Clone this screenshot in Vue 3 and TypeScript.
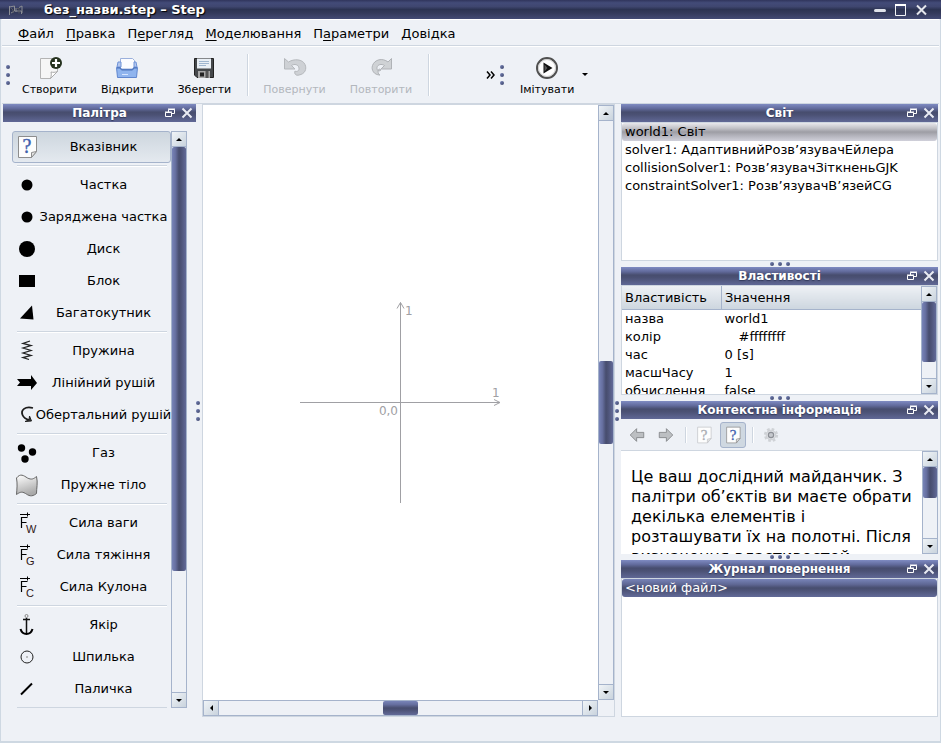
<script setup lang="ts">
import { ref } from 'vue'

interface MenuEntry { before: string; key: string; after: string }
interface ToolAction { label: string; icon: string; disabled?: boolean }
interface PaletteItem { label: string; icon: string }
interface ScrollRange { before: number; size: number; after: number }

const menus: MenuEntry[] = [
  { before: '', key: 'Ф', after: 'айл' },
  { before: '', key: 'П', after: 'равка' },
  { before: 'П', key: 'е', after: 'регляд' },
  { before: '', key: 'М', after: 'оделювання' },
  { before: 'П', key: 'а', after: 'раметри' },
  { before: '', key: 'Д', after: 'овідка' },
]

const fileActions: ToolAction[] = [
  { label: 'Створити', icon: 'new' },
  { label: 'Відкрити', icon: 'open' },
  { label: 'Зберегти', icon: 'save' },
]
const historyActions: ToolAction[] = [
  { label: 'Повернути', icon: 'undo', disabled: true },
  { label: 'Повторити', icon: 'redo', disabled: true },
]

const paletteGroups: PaletteItem[][] = [
  [{ label: 'Вказівник', icon: 'help' }],
  [
    { label: 'Частка', icon: 'particle' },
    { label: 'Заряджена частка', icon: 'particle' },
    { label: 'Диск', icon: 'disk' },
    { label: 'Блок', icon: 'box' },
    { label: 'Багатокутник', icon: 'polygon' },
  ],
  [
    { label: 'Пружина', icon: 'spring' },
    { label: 'Лінійний рушій', icon: 'motor' },
    { label: 'Обертальний рушій', icon: 'circmotor' },
  ],
  [
    { label: 'Газ', icon: 'gas' },
    { label: 'Пружне тіло', icon: 'softbody' },
  ],
  [
    { label: 'Сила ваги', icon: 'forceW' },
    { label: 'Сила тяжіння', icon: 'forceG' },
    { label: 'Сила Кулона', icon: 'forceC' },
  ],
  [
    { label: 'Якір', icon: 'anchor' },
    { label: 'Шпилька', icon: 'pin' },
    { label: 'Паличка', icon: 'stick' },
  ],
]
const activeTool = ref('Вказівник')

const worldItems = [
  'world1: Світ',
  'solver1: АдаптивнийРозв’язувачЕйлера',
  'collisionSolver1: Розв’язувачЗіткненьGJK',
  'constraintSolver1: Розв’язувачВ’язейCG',
]
const selectedWorldItem = ref(0)

const properties = [
  { name: 'назва', value: 'world1' },
  { name: 'колір', value: '#ffffffff', swatch: true },
  { name: 'час', value: '0 [s]' },
  { name: 'масшЧасу', value: '1' },
  { name: 'обчислення', value: 'false' },
]

const scroll: Record<string, ScrollRange> = {
  palette: { before: 0, size: 424, after: 121 },
  sceneY: { before: 240, size: 83, after: 240 },
  sceneX: { before: 164, size: 35, after: 164 },
  props: { before: 0, size: 60, after: 16 },
  info: { before: 0, size: 31, after: 40 },
}

const force = (s: string) =>
  `<path d="M5 3.500h10M12.500 1.500v4" fill="none" stroke="#000"/><path d="M6.500 17V6.500h6M6.500 11.500h5" fill="none" stroke="#000" stroke-width="1.200"/><text x="11" y="22" font-family="Liberation Sans" font-size="11" fill="#301818">${s}</text>`

const page = (ink: string, edge: string) =>
  `<path d="M3.500 1.500h18v15l-5 6h-13z" fill="#fdfdfd" stroke="${edge}"/><path d="M21.500 16.500l-5 6v-5z" fill="#e4e4e4" stroke="${edge}"/><text x="12" y="18" text-anchor="middle" font-family="Liberation Serif" font-size="20" fill="${ink}" stroke="${ink}" stroke-width=".4">?</text>`

const icons: Record<string, string> = {
  new: '<path d="M2.500 2.500h17v13l-7 7h-10z" fill="#f6f6f6" stroke="#b4b4b4"/><path d="M19.500 15.500l-7 7c1-3 1-5 .5-6.500 2 .5 4 .5 6.500-.5z" fill="#fff" stroke="#aaa"/><circle cx="18" cy="7" r="6" fill="#26331f"/><path d="M18 3v8M14 7h8" stroke="#fff" stroke-width="2.200"/>',
  open: '<path d="M5.500 13v-10.500h12l2 2v8.500z" fill="#fbfcff" stroke="#9bb0dc"/><path d="M3 6h3v5H2zM19 6h2l1 5h-3z" fill="#b5c8ee" stroke="#6f93d8"/><path d="M1.500 11.500h4l1 2h11l1-2h4l-1 10h-19z" fill="#8fb4ee" stroke="#5f86cf"/><path d="M2 12h3l1.500 2h11l1.500-2h3" fill="none" stroke="#4d72b8"/><path d="M7 18.500h6" stroke="#d7e5ff"/>',
  save: '<path d="M2.500 2.500h19v19H5l-2.500-2.500z" fill="#45484b" stroke="#222"/><path d="M5 2.500h14v10H5z" fill="#e9eff5"/><path d="M7 5.500h10M7 7.500h10M7 9.500h7" stroke="#9fb6cf"/><path d="M6 15h12v7H6z" fill="#a8a8a8"/><path d="M8 16.500h4v4H8z" fill="#222"/><path d="M15 15v7" stroke="#555" stroke-width="3"/>',
  undo: '<path d="M1.500 2.500v10.500h10.500l-3.500-3.500c3-2 7-1 7.500 2.500s-3 4-4 3c-1 3 1 5 4 4 6-1 8-6 6-10.500-2.500-5.500-11-6-16.500-2.500z" fill="#ced1d5" stroke="#b5b8bc"/>',
  redo: '<path d="M22.500 2.500v10.500H12l3.500-3.500c-3-2-7-1-7.500 2-.5 3.500 3 4 4 2.500-1-1.500-3-1-3 1 0 3 1 3.500 2 4-6 0-9-5-7.500-9.500 2-6 10-8 15.500-3.500z" fill="#cfd2d5" stroke="#b0b3b7"/>',
  play: '<circle cx="12" cy="12" r="10" fill="#fff" stroke="#505050" stroke-width="2"/><circle cx="12" cy="12" r="8.500" fill="none" stroke="#ccc"/><path d="M8.500 6.500v11l9-5.500z" fill="#111"/><path d="M9.500 8.500v7l3-3.500z" fill="#555"/>',
  help: page('#3f5fae', '#8d8d8d'),
  helpOff: page('#a9acb2', '#c4c6c9'),
  particle: '<circle cx="12" cy="12" r="5.500"/>',
  disk: '<circle cx="12" cy="12" r="8"/>',
  box: '<path d="M4 6h16v12H4z"/>',
  polygon: '<path d="M5 17.500L17 4.500l1.500 14z"/>',
  spring: '<path d="M15 2l-7 2.500 8 2-8 2.500 8 2.500-8 2.500 8 2.500-8 2 6 2" fill="none" stroke="#222" stroke-width="1.300"/>',
  motor: '<path d="M2 8h14V4l6 8-6 7v-4H2l3-3.500z"/>',
  circmotor: '<path d="M18 5c-8-2-12.500 2-10.500 7 1 2.500 3 4 7 5" fill="none" stroke="#1c1c1c" stroke-width="1.800"/><path d="M14.500 13l2 5-6.500.5 4-1.500z" fill="#333" stroke="#222"/>',
  gas: '<circle cx="6.500" cy="7" r="3.700"/><circle cx="17.500" cy="11" r="3.700"/><circle cx="10" cy="18" r="3.700"/>',
  softbody: '<defs><linearGradient id="soft" x2=".3" y2="1"><stop stop-color="#fff"/><stop offset="1" stop-color="#aaa"/></linearGradient></defs><path d="M1.500 5c4-5 7-2.500 11 0 4 2 6 1 9-1.500 1.500 6 0 12 0 17-5 4-8 2-11 0-4-2.500-6-1-9 1 .5-6 1-11 0-16.500z" fill="url(#soft)" stroke="#666"/>',
  forceW: force('W'),
  forceG: force('G'),
  forceC: force('C'),
  anchor: '<circle cx="11.500" cy="3" r="1.500" fill="none" stroke="#888"/><path d="M11.500 5v16M8 6.500h7" stroke="#111" stroke-width="1.500"/><path d="M5.500 16c1 3.500 4 5 6 5s5-1.500 6-5" fill="none" stroke="#000" stroke-width="2"/>',
  pin: '<circle cx="12" cy="12" r="6" fill="none" stroke="#222"/><circle cx="12" cy="12" r="1" fill="#aaa"/>',
  stick: '<path d="M6 17.500L17 6.500" stroke="#000" stroke-width="2"/>',
  back: '<path d="M3 12l8.500-8.500v5H21v7h-9.500v5z" fill="#bcbfc2" stroke="#77797c"/>',
  forward: '<path d="M21 12l-8.500-8.500v5H3v7h9.500v5z" fill="#bcbfc2" stroke="#77797c"/>',
  gear: '<circle cx="12" cy="12" r="8" fill="none" stroke="#cfd2d6" stroke-width="3" stroke-dasharray="3.500 2.780"/><circle cx="12" cy="12" r="6.500" fill="#dcdee2" stroke="#c4c7cb"/><circle cx="12" cy="12" r="3.500" fill="#c6c9ce" stroke="#8c8f96" stroke-width="1.500"/>',
}
</script>

<template>
  <div class="window">
    <header class="titlebar">
      <svg class="appicon" viewBox="0 0 16 16" aria-hidden="true">
        <path d="M1.500 4v9M1.500 5l5-1v5h7v3M8 6v4M11 5.500l3-1.500v7M3 11l3-1.500" fill="none" stroke="#8b8d94" />
        <path d="M3 6l2 2v3M9 6.500h2v5" fill="none" stroke="#55575f" />
      </svg>
      <h1>без_назви.step – Step</h1>
      <div class="winbuttons">
        <button aria-label="Згорнути"><svg viewBox="0 0 14 14"><path d="M2.500 7.500h9" stroke="#dfe2ea" stroke-width="3" stroke-linecap="round" /></svg></button>
        <button aria-label="Розгорнути"><svg viewBox="0 0 14 14"><path d="M1.500 2.500h10v10h-10z" fill="none" stroke="#f0f2f6" /><path d="M1 2h11" stroke="#fff" stroke-width="2" /></svg></button>
        <button aria-label="Закрити"><svg viewBox="0 0 14 14"><path d="M2 2.500l9 9M11 2.500l-9 9" stroke="#e4e6ec" stroke-width="2" /></svg></button>
      </div>
    </header>

    <nav class="menubar">
      <button v-for="m in menus" :key="m.after">{{ m.before }}<u>{{ m.key }}</u>{{ m.after }}</button>
    </nav>

    <div class="toolbars">
      <div class="toolbar main-tools">
        <span class="dots"><i /><i /><i /></span>
        <div class="group">
          <button v-for="a in fileActions" :key="a.label">
            <svg viewBox="0 0 24 24" v-html="icons[a.icon]" />{{ a.label }}
          </button>
        </div>
        <span class="vsep" />
        <div class="group">
          <button v-for="a in historyActions" :key="a.label" :disabled="a.disabled">
            <svg viewBox="0 0 24 24" v-html="icons[a.icon]" />{{ a.label }}
          </button>
        </div>
        <span class="vsep" />
        <button class="more" aria-label="Більше">
          <svg viewBox="0 0 10 8"><path d="M1 0.500l3 3.500-3 3.500M5 0.500l3 3.500-3 3.500" fill="none" stroke="#000" stroke-width="1.500" /></svg>
        </button>
      </div>
      <div class="toolbar sim-tools">
        <span class="dots"><i /><i /><i /></span>
        <button><svg viewBox="0 0 24 24" v-html="icons.play" />Імітувати</button>
        <button class="drop" aria-label="Варіанти імітації"><svg viewBox="0 0 6 4"><path d="M0 0h6L3 3z" /></svg></button>
      </div>
    </div>

    <main class="workspace">
      <section class="dock">
        <header class="docktitle">
          <h2>Палітра</h2>
          <div class="dockbuttons">
            <button aria-label="Від’єднати"><svg viewBox="0 0 12 12"><path d="M4.500 5V2.500h6v4H8M4 2h7M1.500 5.500h6v4h-6zM1 5h7" fill="none" stroke="#fff" /></svg></button>
            <button aria-label="Закрити"><svg viewBox="0 0 12 12"><path d="M1.500 1.500l9 9M10.500 1.500l-9 9" stroke="#e9ebf3" stroke-width="2" /></svg></button>
          </div>
        </header>
        <div class="palette">
          <div class="palette-list">
            <div v-for="(g, i) in paletteGroups" :key="i" class="palette-group">
              <button
                v-for="p in g"
                :key="p.label"
                :class="{ active: p.label === activeTool }"
                @click="activeTool = p.label"
              >
                <svg viewBox="0 0 24 24" v-html="icons[p.icon]" />
                <span>{{ p.label }}</span>
              </button>
            </div>
          </div>
          <div class="sb vertical">
            <button class="up" aria-label="Вгору" />
            <div class="track">
              <i :style="{ flexGrow: scroll.palette.before }" /><b :style="{ flexGrow: scroll.palette.size }" /><i :style="{ flexGrow: scroll.palette.after }" />
            </div>
            <button class="down" aria-label="Вниз" />
          </div>
        </div>
      </section>

      <div class="splitter column"><span class="dots"><i /><i /><i /></span></div>

      <section class="scene">
        <div class="view">
          <svg class="axes" viewBox="0 0 203 203" role="img" aria-label="Осі координат">
            <path d="M1 101.500h200M101.500 202V1.500M98 7.500l3.500-6 3.500 6M195 98.500l6 3-6 3" fill="none" stroke="#a0a0a4" />
            <text x="106" y="14">1</text>
            <text x="193" y="96">1</text>
            <text x="99" y="114" text-anchor="end">0,0</text>
          </svg>
        </div>
        <div class="sb vertical">
          <button class="up" aria-label="Вгору" />
          <div class="track">
            <i :style="{ flexGrow: scroll.sceneY.before }" /><b :style="{ flexGrow: scroll.sceneY.size }" /><i :style="{ flexGrow: scroll.sceneY.after }" />
          </div>
          <button class="down" aria-label="Вниз" />
        </div>
        <div class="sb horizontal">
          <button class="left" aria-label="Ліворуч" />
          <div class="track">
            <i :style="{ flexGrow: scroll.sceneX.before }" /><b :style="{ flexGrow: scroll.sceneX.size }" /><i :style="{ flexGrow: scroll.sceneX.after }" />
          </div>
          <button class="right" aria-label="Праворуч" />
        </div>
        <div class="corner" />
      </section>

      <div class="splitter column"><span class="dots"><i /><i /><i /></span></div>

      <aside class="side">
        <section class="dock">
          <header class="docktitle">
            <h2>Світ</h2>
            <div class="dockbuttons">
              <button aria-label="Від’єднати"><svg viewBox="0 0 12 12"><path d="M4.500 5V2.500h6v4H8M4 2h7M1.500 5.500h6v4h-6zM1 5h7" fill="none" stroke="#fff" /></svg></button>
              <button aria-label="Закрити"><svg viewBox="0 0 12 12"><path d="M1.500 1.500l9 9M10.500 1.500l-9 9" stroke="#e9ebf3" stroke-width="2" /></svg></button>
            </div>
          </header>
          <ul class="list" role="listbox">
            <li
              v-for="(w, i) in worldItems"
              :key="w"
              role="option"
              :aria-selected="i === selectedWorldItem"
              :class="{ inactive: i === selectedWorldItem }"
              @click="selectedWorldItem = i"
            >{{ w }}</li>
          </ul>
        </section>

        <div class="splitter"><span class="dots"><i /><i /><i /></span></div>

        <section class="dock">
          <header class="docktitle">
            <h2>Властивості</h2>
            <div class="dockbuttons">
              <button aria-label="Від’єднати"><svg viewBox="0 0 12 12"><path d="M4.500 5V2.500h6v4H8M4 2h7M1.500 5.500h6v4h-6zM1 5h7" fill="none" stroke="#fff" /></svg></button>
              <button aria-label="Закрити"><svg viewBox="0 0 12 12"><path d="M1.500 1.500l9 9M10.500 1.500l-9 9" stroke="#e9ebf3" stroke-width="2" /></svg></button>
            </div>
          </header>
          <div class="props">
            <div class="clip">
              <table>
                <thead><tr><th>Властивість</th><th>Значення</th></tr></thead>
                <tbody>
                  <tr v-for="p in properties" :key="p.name">
                    <td>{{ p.name }}</td>
                    <td :class="{ swatch: p.swatch }">{{ p.value }}</td>
                  </tr>
                </tbody>
              </table>
            </div>
            <div class="sb vertical">
              <button class="up" aria-label="Вгору" />
              <div class="track">
                <i :style="{ flexGrow: scroll.props.before }" /><b :style="{ flexGrow: scroll.props.size }" /><i :style="{ flexGrow: scroll.props.after }" />
              </div>
              <button class="down" aria-label="Вниз" />
            </div>
          </div>
        </section>

        <div class="splitter"><span class="dots"><i /><i /><i /></span></div>

        <section class="dock">
          <header class="docktitle">
            <h2>Контекстна інформація</h2>
            <div class="dockbuttons">
              <button aria-label="Від’єднати"><svg viewBox="0 0 12 12"><path d="M4.500 5V2.500h6v4H8M4 2h7M1.500 5.500h6v4h-6zM1 5h7" fill="none" stroke="#fff" /></svg></button>
              <button aria-label="Закрити"><svg viewBox="0 0 12 12"><path d="M1.500 1.500l9 9M10.500 1.500l-9 9" stroke="#e9ebf3" stroke-width="2" /></svg></button>
            </div>
          </header>
          <div class="infobar">
            <button disabled aria-label="Назад"><svg viewBox="0 0 24 24" v-html="icons.back" /></button>
            <button disabled aria-label="Вперед"><svg viewBox="0 0 24 24" v-html="icons.forward" /></button>
            <span class="vsep" />
            <button disabled aria-label="Синхронізувати"><svg viewBox="0 0 24 24" v-html="icons.helpOff" /></button>
            <button class="pressed" aria-pressed="true" aria-label="Стежити за контекстом"><svg viewBox="0 0 24 24" v-html="icons.help" /></button>
            <span class="vsep" />
            <button disabled aria-label="Відкрити у переглядачі"><svg viewBox="0 0 24 24" v-html="icons.gear" /></button>
          </div>
          <div class="info">
            <div class="clip"><p>Це ваш дослідний майданчик. З палітри об’єктів ви маєте обрати декілька елементів і розташувати їх на полотні. Після визначення властивостей</p></div>
            <div class="sb vertical">
              <button class="up" aria-label="Вгору" />
              <div class="track">
                <i :style="{ flexGrow: scroll.info.before }" /><b :style="{ flexGrow: scroll.info.size }" /><i :style="{ flexGrow: scroll.info.after }" />
              </div>
              <button class="down" aria-label="Вниз" />
            </div>
          </div>
        </section>

        <div class="splitter"><span class="dots"><i /><i /><i /></span></div>

        <section class="dock">
          <header class="docktitle">
            <h2>Журнал повернення</h2>
            <div class="dockbuttons">
              <button aria-label="Від’єднати"><svg viewBox="0 0 12 12"><path d="M4.500 5V2.500h6v4H8M4 2h7M1.500 5.500h6v4h-6zM1 5h7" fill="none" stroke="#fff" /></svg></button>
              <button aria-label="Закрити"><svg viewBox="0 0 12 12"><path d="M1.500 1.500l9 9M10.500 1.500l-9 9" stroke="#e9ebf3" stroke-width="2" /></svg></button>
            </div>
          </header>
          <ul class="list" role="listbox">
            <li class="selected" role="option" aria-selected="true">&lt;новий файл&gt;</li>
          </ul>
        </section>
      </aside>
    </main>
    <footer class="statusbar" />
  </div>
</template>

<style>
body {
  margin: 0;
  background: #eef1f6;
}
</style>

<style scoped>
.window {
  box-sizing: border-box;
  display: flex;
  flex-direction: column;
  height: 100vh;
  min-height: 600px;
  color: #000;
  background: #eef1f6;
  box-shadow: inset 1px 0 #ced8e2, inset -1px 0 #ced8e2;
  font: 13px/18px "DejaVu Sans", sans-serif;
}
button {
  margin: 0;
  padding: 0;
  border: 0;
  background: none;
  color: inherit;
  font: inherit;
}
svg { display: block; flex: none; }
h1, h2, p, ul { margin: 0; padding: 0; }

.titlebar {
  display: flex;
  align-items: center;
  flex: none;
  height: 19px;
  padding: 0 12px 0 8px;
  color: #fff;
  background: linear-gradient(#30355c, #434b78 15%, #3f466f 35%, #2c3352 50%, #343a5c 70%, #434a74);
}
.appicon { width: 16px; height: 16px; }
h1 {
  flex: 1;
  padding-left: 20px;
  font-size: 13px;
  line-height: 19px;
  text-shadow: 1px 1px 1px #000;
}
.winbuttons { display: flex; gap: 7px; }
.winbuttons svg { width: 14px; height: 14px; }

.menubar {
  display: flex;
  flex: none;
  height: 25px;
  margin: 0 2px;
  padding-left: 10px;
  border-top: 1px solid #fff;
  border-bottom: 1px solid #ced6e0;
}
.menubar button { padding: 0 6px; height: 27px; }
.menubar u { text-decoration-thickness: 1px; text-underline-offset: 2px; }

.toolbars {
  display: grid;
  grid-template-columns: 494fr 443fr;
  flex: none;
  height: 56px;
  margin: 0 2px;
  border-top: 1px solid #fff;
  border-bottom: 1px solid #ced6e0;
}
.toolbar {
  display: flex;
  align-items: center;
  font-size: 11px;
  line-height: 16px;
}
.toolbar .dots { margin-left: 4px; }
.group { display: flex; }
.toolbar button {
  display: flex;
  flex-direction: column;
  align-items: center;
  gap: 2px;
  padding: 3px 12px 0;
}
.toolbar button svg { width: 24px; height: 24px; }
.toolbar button:disabled { color: #b3b7bd; }
.toolbar .more { margin-left: auto; padding: 0 0 0 4px; }
.toolbar .more svg { width: 10px; height: 8px; }
.toolbar .drop { padding: 0; }
.toolbar .drop svg { width: 6px; height: 4px; }
.sim-tools .dots { margin-right: 8px; }
.sim-tools button { padding: 3px 8px 0; }
.vsep {
  width: 1px;
  height: 42px;
  margin: 0 2px 0 4px;
  border-right: 1px solid #fff;
  background: #ced6e0;
}

.dots { display: flex; flex-direction: column; gap: 4px; }
.dots i {
  width: 4px;
  height: 4px;
  border-radius: 2px;
  background: linear-gradient(135deg, #7683b8, #3c4468);
}

.workspace {
  flex: 1;
  min-height: 0;
  display: grid;
  grid-template-columns: 193px 6px minmax(0, 1fr) 6px minmax(240px, 317px);
  grid-template-rows: minmax(0, 1fr);
  padding: 0 3px;
}
.splitter { display: flex; justify-content: center; align-items: center; }
.splitter.column { justify-content: flex-start; }
.splitter:not(.column) .dots { flex-direction: row; }

.dock { display: flex; flex-direction: column; min-width: 0; min-height: 0; overflow: hidden; }
.docktitle {
  display: grid;
  grid-template-columns: 1fr auto 1fr;
  align-items: center;
  flex: none;
  height: 18px;
  padding: 0 3px;
  color: #fff;
  background: linear-gradient(#7f8bc2, #626b9c 25%, #474d6e 45%, #4b5174 60%, #606896);
}
h2 { grid-column: 2; font-size: 12px; line-height: 18px; text-shadow: 0 1px 1px #333a5c; }
.dockbuttons { display: flex; justify-content: flex-end; gap: 5px; }
.dockbuttons svg { width: 12px; height: 12px; }

.palette { display: flex; flex: 1; min-height: 0; padding: 9px; }
.palette-list { flex: 1; min-width: 0; overflow: hidden; }
.palette-group::after {
  content: "";
  display: block;
  height: 1px;
  margin: 2px 4px 2px 5px;
  border-bottom: 1px solid #fff;
  background: #ced6e0;
}
.palette-group button {
  box-sizing: border-box;
  display: flex;
  align-items: center;
  width: 100%;
  height: 32px;
  padding-left: 2px;
  border: 1px solid transparent;
  border-radius: 3px;
}
.palette-group span {
  display: flex;
  justify-content: center;
  flex: 1;
  min-width: 0;
  white-space: nowrap;
}
.palette-group svg { width: 24px; height: 24px; margin-right: -2px; }
.palette-group .active {
  border-color: #a5b3cb;
  background: linear-gradient(#cdd6de, #e4e9ef);
}

.sb { display: flex; background: #eef1f6; box-sizing: border-box; border: 1px solid #a5b3cb; }
.vertical { flex-direction: column; width: 16px; }
.horizontal { height: 16px; }
.sb .track { display: flex; flex: 1; flex-direction: inherit; }
.sb i, .sb b { flex: 0 1 0; }
.sb b { border-radius: 2px; }
.vertical b { background: linear-gradient(90deg, #7884b8, #666f9f 25%, #474d6e 50%, #4d5377 65%, #626a98); }
.horizontal b { background: linear-gradient(#7884b8, #666f9f 25%, #474d6e 50%, #4d5377 65%, #626a98); }
.sb button {
  display: flex;
  align-items: center;
  justify-content: center;
  flex: none;
  width: 14px;
  height: 14px;
  background: linear-gradient(135deg, #f0f4f7, #c9d3dd);
}
.sb button::before { content: ""; border: 3px solid transparent; }
.sb .up { border-bottom: 1px solid #a5b3cb; }
.sb .down { border-top: 1px solid #a5b3cb; }
.sb .left { border-right: 1px solid #a5b3cb; }
.sb .right { border-left: 1px solid #a5b3cb; }
.sb .up, .sb .down { height: 15px; }
.sb .left, .sb .right { width: 15px; }
.sb .up::before { border-top: 0; border-bottom-color: #000; }
.sb .down::before { border-bottom: 0; border-top-color: #000; }
.sb .left::before { border-left: 0; border-right-color: #000; }
.sb .right::before { border-right: 0; border-left-color: #000; }

.scene {
  display: grid;
  grid-template: minmax(0, 1fr) 16px / minmax(0, 1fr) 16px;
  border: 1px solid #ced6e0;
}
.view { display: grid; place-items: center; background: #fff; }
.axes { width: 203px; height: 203px; }
.axes text { font-size: 12px; fill: #a0a0a4; }

.side {
  display: grid;
  grid-template-columns: minmax(0, 1fr);
  grid-template-rows: minmax(0, 157fr) 6px minmax(0, 128fr) 6px minmax(0, 153fr) 6px minmax(0, 157fr);
}
.list {
  flex: 1;
  min-height: 0;
  overflow: hidden;
  list-style: none;
  border: 1px solid #ced6e0;
  background: #fff;
}
.list li { padding: 0 3px; white-space: nowrap; border-radius: 3px; }
.list .inactive { background: linear-gradient(#e8e8ec, #c0c0c6 30%, #9d9da4 50%, #aeaeb6 65%, #d0d0da); }
.list .selected { color: #fff; background: linear-gradient(#7884b8, #5f6794 30%, #474d6e 50%, #4e5478 65%, #626a98); }

.props, .info { display: flex; flex: 1; min-height: 0; background: #fff; }
.props { border: 1px solid #ced6e0; }
.clip { flex: 1; min-width: 0; overflow: hidden; }
table { width: 100%; border-collapse: collapse; table-layout: fixed; }
th, td { padding: 0 3px; text-align: left; font-weight: normal; white-space: nowrap; }
th {
  height: 23px;
  border-bottom: 1px solid #a5b3cb;
  background: linear-gradient(#eef1f5, #cdd6df);
}
th:first-child { width: 93px; border-right: 1px solid #a5b3cb; }
td.swatch { padding-left: 17px; }

.infobar {
  display: flex;
  align-items: center;
  flex: none;
  height: 30px;
  padding: 1px 3px 0;
  border-bottom: 1px solid #ced6e0;
  gap: 3px;
}
.infobar button {
  display: grid;
  place-items: center;
  box-sizing: border-box;
  width: 26px;
  height: 26px;
  border: 1px solid transparent;
  border-radius: 3px;
}
.infobar svg { width: 18px; height: 18px; }
.infobar .vsep { height: 16px; margin: 0 1px 0 3px; }
.infobar .pressed { border-color: #a5b3cb; background: #cfd8e1; }
.info p { padding: 16px 8px 0 10px; font-size: 16px; line-height: 20px; }

.statusbar {
  flex: none;
  height: 24px;
  border-bottom: 2px solid #ced8e2;
}
</style>
